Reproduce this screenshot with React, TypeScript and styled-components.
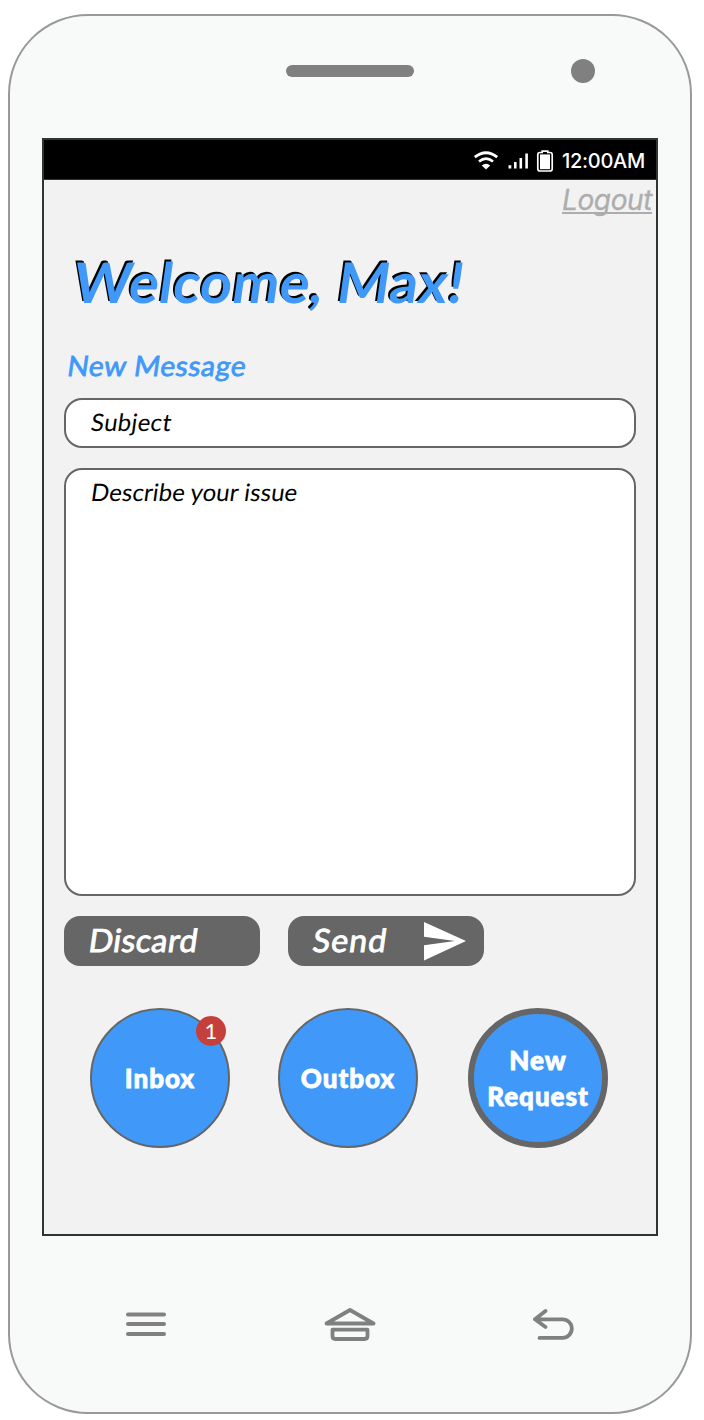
import React from "react";
import styled, { createGlobalStyle } from "styled-components";

const BLUE = "#4099f8";
const GREY = "#666666";
const HARDWARE = "#808080";

const GlobalStyle = createGlobalStyle`
  *, *::before, *::after { box-sizing: border-box; }
  body { margin: 0; background: #fff; font-family: Lato, "Open Sans", sans-serif; }
  svg { display: block; }
`;

const Page = styled.main`
  width: 704px;
  height: 1420px;
  padding: 14px 12px 6px 8px;
`;

const Device = styled.div`
  display: flex;
  flex-direction: column;
  width: 684px;
  height: 1400px;
  padding: 0 32px;
  border: 2px solid #999;
  border-radius: 80px;
  background: #f8faf9;
`;

const DeviceTop = styled.div`
  display: flex;
  flex: none;
  align-items: center;
  justify-content: flex-end;
  gap: 157px;
  height: 122px;
  padding: 0 63px 12px 0;
`;

const Speaker = styled.div`
  width: 128px;
  height: 12px;
  border-radius: 6px;
  background: ${HARDWARE};
`;

const Camera = styled.div`
  width: 24px;
  height: 24px;
  border-radius: 50%;
  background: ${HARDWARE};
`;

const Screen = styled.section`
  display: flex;
  flex: none;
  flex-direction: column;
  height: 1098px;
  border: 2px solid #333;
  background: #f2f2f2;
`;

const StatusBar = styled.div`
  display: flex;
  flex: none;
  align-items: center;
  justify-content: flex-end;
  height: 40px;
  padding-right: 10px;
  border-bottom: 1px solid #333;
  background: #000;
  color: #fff;
`;

const Clock = styled.span`
  width: 84px;
  margin-left: 8px;
  font: 500 20px/40px Inter, sans-serif;
  letter-spacing: -0.3px;
  white-space: nowrap;
  padding-top: 2px;
`;

const Logout = styled.a`
  align-self: flex-end;
  height: 40px;
  margin-right: 4px;
  font: italic 400 28px/40px Inter, sans-serif;
  letter-spacing: -0.4px;
  color: #adadad;
  -webkit-text-stroke: 0.3px #adadad;
  text-decoration: underline;
  text-decoration-thickness: 2px;
  text-underline-offset: 2px;
  text-decoration-skip-ink: none;
`;

const Content = styled.div`
  display: flex;
  flex-direction: column;
  padding: 0 20px;
`;

const Slanted = styled.span<{ $spacing: number }>`
  display: inline-block;
  letter-spacing: ${(p) => p.$spacing}px;
  white-space: nowrap;
  transform: skewX(-8deg);
  transform-origin: 0 80%;
`;

const Title = styled.h1`
  margin: 28px 0 0 7px;
  font-size: 56px;
  font-weight: 700;
  line-height: 68px;
  color: ${BLUE};
  text-shadow: -2px -2px 0 #000;
`;

const SectionTitle = styled.h2`
  margin: 29px 0 0 2px;
  font-size: 28px;
  font-weight: 400;
  line-height: 40px;
  color: ${BLUE};
  -webkit-text-stroke: 0.8px ${BLUE};
`;

const Field = styled.div<{ $height: number; $gap: number }>`
  height: ${(p) => p.$height}px;
  margin-top: ${(p) => p.$gap}px;
  padding: 6px 24px;
  border: 2px solid ${GREY};
  border-radius: 18px;
  background: #fff;
  font-size: 24px;
  line-height: 32px;
  color: #000;
`;

const Actions = styled.div`
  display: flex;
  gap: 28px;
  margin-top: 20px;
`;

const ActionButton = styled.button`
  display: flex;
  align-items: center;
  justify-content: space-between;
  width: 196px;
  height: 50px;
  padding: 0 18px 0 23px;
  border: 0;
  border-radius: 16px;
  background: ${GREY};
  color: #fff;
  font: 400 32px/46px Lato, sans-serif;
`;

const ActionLabel = styled(Slanted)`
  padding-bottom: 2px;
  -webkit-text-stroke: 0.9px #fff;
`;

const Tabs = styled.nav`
  display: flex;
  margin: 42px 0 0 26px;
`;

const Tab = styled.button<{ $active?: boolean; $gap?: number }>`
  position: relative;
  flex: none;
  width: 140px;
  height: 140px;
  margin-left: ${(p) => p.$gap ?? 0}px;
  padding: 0;
  border: ${(p) => (p.$active ? 6 : 2)}px solid ${GREY};
  border-radius: 50%;
  background: ${BLUE};
  color: #fff;
  font: 900 26px/36px Lato, sans-serif;
  letter-spacing: 0.95px;
  -webkit-text-stroke: 0.8px #fff;
`;

const Badge = styled.span`
  position: absolute;
  top: 6px;
  right: 2px;
  width: 30px;
  height: 30px;
  border-radius: 50%;
  background: #c5403b;
  font-size: 22px;
  font-weight: 400;
  line-height: 29px;
  letter-spacing: 0;
  text-align: center;
  -webkit-text-stroke: 0;
`;

const DeviceKeys = styled.div`
  display: flex;
  align-items: center;
  justify-content: space-between;
  height: 176px;
  padding: 0 83px;
`;

const StatusIcons = () => (
  <svg width="82" height="38" viewBox="472 140 82 38" fill="none">
    <path d="M474.8 156.2Q486 147.2 497.2 156.2" stroke="#fff" strokeWidth="2.8" />
    <path d="M479 160.5Q486 154.6 493 160.5" stroke="#fff" strokeWidth="2.6" />
    <path d="M481.8 164.4Q486 161 490.2 164.4L486 168.6Z" fill="#fff" />
    <path d="M508.5 164.2h2.8v3.2h-2.8zM514 161h2.6v6.4H514zM519.5 157h2.6v10.4h-2.6zM525.3 152.5h2.6v14.9h-2.6z" fill="#fff" />
    <path d="M540 151.5h2.2v-1.3h5.6v1.3h2.2q2.2 0 2.2 2.2v14q0 2.3-2.2 2.3h-10q-2.2 0-2.2-2.3v-14q0-2.2 2.2-2.2Z" stroke="#fff" strokeWidth="1.7" />
    <path d="M540 153.4h10v14.8h-10z" fill="#fff" />
  </svg>
);

const SendIcon = () => (
  <svg width="42" height="40" viewBox="0 0 42 40">
    <path d="M0 1L42 20L0 39.5V24.2L31 20L0 15.7Z" fill="#fff" />
  </svg>
);

const MenuKey = () => (
  <svg width="42" height="36" viewBox="0 0 42 36" stroke={HARDWARE} strokeWidth="4" strokeLinecap="round">
    <path d="M3 8.5H39M3 18H39M3 28H39" />
  </svg>
);

const HomeKey = () => (
  <svg width="52" height="36" viewBox="0 0 52 36" fill="none" stroke={HARDWARE} strokeWidth="3.8" strokeLinejoin="round">
    <path d="M26 4L49.5 17.5H2.5Z" />
    <path d="M8.5 23.7H43.5V30Q43.5 33 40.5 33H11.5Q8.5 33 8.5 30Z" />
  </svg>
);

const BackKey = () => (
  <svg width="42" height="36" viewBox="0 0 42 36" fill="none" stroke={HARDWARE} strokeWidth="3.8" strokeLinecap="round" strokeLinejoin="round">
    <path d="M12.5 5L2 13.3L12.5 21M7 13.3H29.5A9.3 9.3 0 0 1 29.5 31.9H6.5" />
  </svg>
);

export default function App() {
  return (
    <Page>
      <GlobalStyle />
      <Device>
        <DeviceTop>
          <Speaker />
          <Camera />
        </DeviceTop>
        <Screen>
          <StatusBar>
            <StatusIcons />
            <Clock>12:00AM</Clock>
          </StatusBar>
          <Logout>Logout</Logout>
          <Content>
            <Title>
              <Slanted $spacing={0.3}>Welcome, Max!</Slanted>
            </Title>
            <SectionTitle>
              <Slanted $spacing={0.65}>New Message</Slanted>
            </SectionTitle>
            <Field $height={50} $gap={13}>
              <Slanted $spacing={0.3}>Subject</Slanted>
            </Field>
            <Field $height={428} $gap={20}>
              <Slanted $spacing={0.08}>Describe your issue</Slanted>
            </Field>
            <Actions>
              <ActionButton>
                <ActionLabel $spacing={0.5}>Discard</ActionLabel>
              </ActionButton>
              <ActionButton>
                <ActionLabel $spacing={1.2}>Send</ActionLabel>
                <SendIcon />
              </ActionButton>
            </Actions>
            <Tabs>
              <Tab>
                Inbox
                <Badge>1</Badge>
              </Tab>
              <Tab $gap={48}>Outbox</Tab>
              <Tab $gap={50} $active>
                New
                <br />
                Request
              </Tab>
            </Tabs>
          </Content>
        </Screen>
        <DeviceKeys>
          <MenuKey />
          <HomeKey />
          <BackKey />
        </DeviceKeys>
      </Device>
    </Page>
  );
}
